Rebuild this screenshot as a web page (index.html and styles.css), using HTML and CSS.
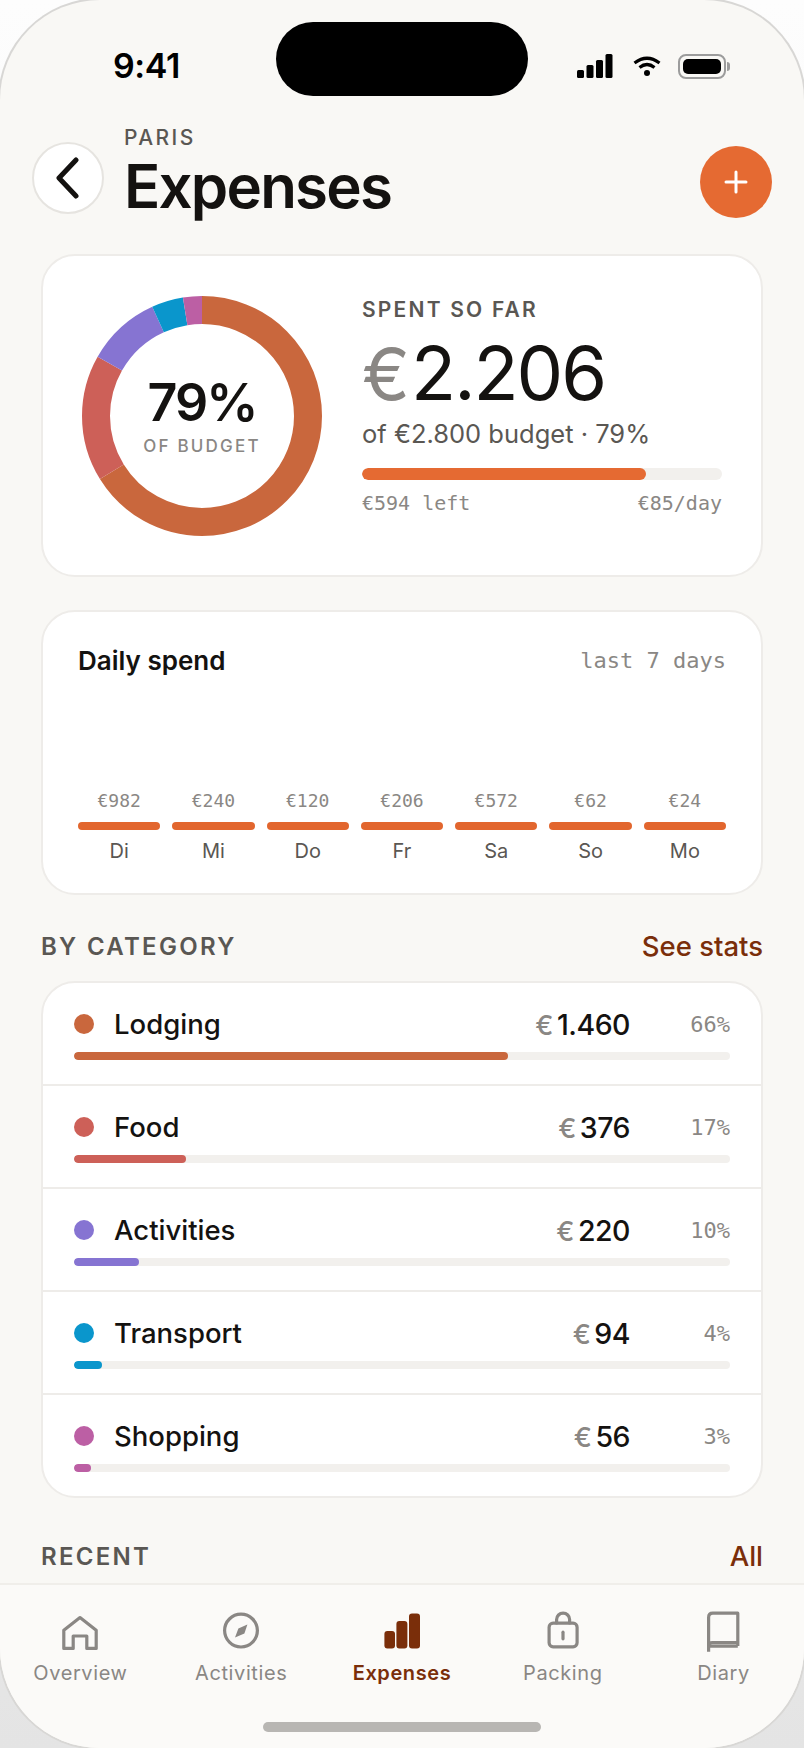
FILE: index.html
```html
<!DOCTYPE html>
<html lang="en">
<head>
    <meta charset="UTF-8">
    <meta name="viewport" content="width=device-width, initial-scale=1.0">
    <title>Expenses</title>
    <link rel="stylesheet" href="styles.css">
</head>
<body>
    <div class="phone">
        <div class="island"></div>

        <div class="status">
            <span class="time">9:41</span>
            <div class="status-icons">
                <svg class="signal" width="36" height="24" viewBox="0 0 36 24">
                    <rect x="0" y="16" width="7" height="8" rx="1.5"/>
                    <rect x="9.5" y="11" width="7" height="13" rx="1.5"/>
                    <rect x="19" y="6" width="7" height="18" rx="1.5"/>
                    <rect x="28.5" y="0" width="7" height="24" rx="1.5"/>
                </svg>
                <svg class="wifi" width="28" height="20" viewBox="0 0 28 20" fill="none" stroke="#000" stroke-width="3.2">
                    <path d="M1.5 7 Q14 -2.5 26.5 7"/>
                    <path d="M6.5 11.5 Q14 5.5 21.5 11.5"/>
                    <circle cx="14" cy="17" r="3" fill="#000" stroke="none"/>
                </svg>
                <div class="battery"><div class="battery-fill"></div></div>
            </div>
        </div>

        <header class="header">
            <button class="back" type="button">
                <svg width="26" height="42" viewBox="0 0 26 42" fill="none" stroke="#141210" stroke-width="5" stroke-linecap="round" stroke-linejoin="round">
                    <path d="M21 3 L4 21 L21 39"/>
                </svg>
            </button>
            <div class="title-block">
                <div class="eyebrow">PARIS</div>
                <h1>Expenses</h1>
            </div>
            <button class="add" type="button">
                <svg width="24" height="24" viewBox="0 0 24 24" stroke="#fff" stroke-width="3" stroke-linecap="round">
                    <path d="M12 2 V22 M2 12 H22"/>
                </svg>
            </button>
        </header>

        <main class="content">
            <section class="card summary">
                <div class="donut">
                    <svg width="240" height="240" viewBox="0 0 240 240" fill="none" stroke-width="28">
                        <g transform="rotate(-90 120 120)">
                            <circle cx="120" cy="120" r="106" pathLength="100" stroke="#c9673d" stroke-dasharray="66.18 100"/>
                            <circle cx="120" cy="120" r="106" pathLength="100" stroke="#cd6058" stroke-dasharray="17.04 100" stroke-dashoffset="-66.18"/>
                            <circle cx="120" cy="120" r="106" pathLength="100" stroke="#8674d2" stroke-dasharray="9.97 100" stroke-dashoffset="-83.22"/>
                            <circle cx="120" cy="120" r="106" pathLength="100" stroke="#0a96cc" stroke-dasharray="4.26 100" stroke-dashoffset="-93.19"/>
                            <circle cx="120" cy="120" r="106" pathLength="100" stroke="#bc5fa4" stroke-dasharray="2.55 100" stroke-dashoffset="-97.45"/>
                        </g>
                    </svg>
                    <div class="donut-label">
                        <div class="donut-pct">79%</div>
                        <div class="donut-sub">OF BUDGET</div>
                    </div>
                </div>
                <div class="summary-text">
                    <div class="spent-label">SPENT SO FAR</div>
                    <div class="spent"><span class="euro">€</span>2.206</div>
                    <div class="budget">of €2.800 budget · 79%</div>
                    <div class="track track-big"><div class="fill fill-orange" style="width: 79%"></div></div>
                    <div class="summary-foot">
                        <span>€594 left</span>
                        <span>€85/day</span>
                    </div>
                </div>
            </section>

            <section class="card daily">
                <div class="daily-head">
                    <span class="daily-title">Daily spend</span>
                    <span class="daily-range">last 7 days</span>
                </div>
                <div class="chart">
                    <div class="day"><span class="day-value">€982</span><div class="day-bar"></div><span class="day-name">Di</span></div>
                    <div class="day"><span class="day-value">€240</span><div class="day-bar"></div><span class="day-name">Mi</span></div>
                    <div class="day"><span class="day-value">€120</span><div class="day-bar"></div><span class="day-name">Do</span></div>
                    <div class="day"><span class="day-value">€206</span><div class="day-bar"></div><span class="day-name">Fr</span></div>
                    <div class="day"><span class="day-value">€572</span><div class="day-bar"></div><span class="day-name">Sa</span></div>
                    <div class="day"><span class="day-value">€62</span><div class="day-bar"></div><span class="day-name">So</span></div>
                    <div class="day"><span class="day-value">€24</span><div class="day-bar"></div><span class="day-name">Mo</span></div>
                </div>
            </section>

            <div class="section-head">
                <span class="section-title">BY CATEGORY</span>
                <span class="section-link">See stats</span>
            </div>

            <section class="card categories">
                <div class="cat">
                    <div class="cat-top">
                        <span class="dot lodging"></span>
                        <span class="cat-name">Lodging</span>
                        <span class="cat-amount"><span class="euro">€</span>1.460</span>
                        <span class="cat-pct">66%</span>
                    </div>
                    <div class="track"><div class="fill lodging" style="width: 66.18%"></div></div>
                </div>
                <div class="cat">
                    <div class="cat-top">
                        <span class="dot food"></span>
                        <span class="cat-name">Food</span>
                        <span class="cat-amount"><span class="euro">€</span>376</span>
                        <span class="cat-pct">17%</span>
                    </div>
                    <div class="track"><div class="fill food" style="width: 17.04%"></div></div>
                </div>
                <div class="cat">
                    <div class="cat-top">
                        <span class="dot activities"></span>
                        <span class="cat-name">Activities</span>
                        <span class="cat-amount"><span class="euro">€</span>220</span>
                        <span class="cat-pct">10%</span>
                    </div>
                    <div class="track"><div class="fill activities" style="width: 9.97%"></div></div>
                </div>
                <div class="cat">
                    <div class="cat-top">
                        <span class="dot transport"></span>
                        <span class="cat-name">Transport</span>
                        <span class="cat-amount"><span class="euro">€</span>94</span>
                        <span class="cat-pct">4%</span>
                    </div>
                    <div class="track"><div class="fill transport" style="width: 4.26%"></div></div>
                </div>
                <div class="cat">
                    <div class="cat-top">
                        <span class="dot shopping"></span>
                        <span class="cat-name">Shopping</span>
                        <span class="cat-amount"><span class="euro">€</span>56</span>
                        <span class="cat-pct">3%</span>
                    </div>
                    <div class="track"><div class="fill shopping" style="width: 2.54%"></div></div>
                </div>
            </section>

            <div class="section-head section-recent">
                <span class="section-title">RECENT</span>
                <span class="section-link">All</span>
            </div>
        </main>

        <nav class="tabbar">
            <div class="tabs">
                <div class="tab">
                    <svg width="44" height="44" viewBox="0 0 22 22" fill="none" stroke="currentColor" stroke-width="1.6" stroke-linejoin="round">
                        <path d="M2.9 19.7 V10.6 L11 4.3 L19.1 10.6 V19.7 H14.4 V13.5 H7.6 V19.7 Z"/>
                    </svg>
                    <span>Overview</span>
                </div>
                <div class="tab">
                    <svg width="44" height="44" viewBox="0 0 22 22" fill="none" stroke="currentColor" stroke-width="1.6">
                        <circle cx="11" cy="10.8" r="8.2"/>
                        <polygon points="14.2,7.7 12.7,12.2 8,14.2 9.7,9.7" fill="currentColor" stroke="none"/>
                    </svg>
                    <span>Activities</span>
                </div>
                <div class="tab tab-active">
                    <svg width="44" height="44" viewBox="0 0 22 22" fill="currentColor">
                        <rect x="2.2" y="11" width="5.3" height="8.7" rx="1.5"/>
                        <rect x="8.2" y="6" width="5.5" height="13.7" rx="1.5"/>
                        <rect x="14.5" y="2.2" width="5.5" height="17.5" rx="1.5"/>
                    </svg>
                    <span>Expenses</span>
                </div>
                <div class="tab">
                    <svg width="44" height="44" viewBox="0 0 22 22" fill="none" stroke="currentColor" stroke-width="1.6" stroke-linecap="round">
                        <rect x="4.05" y="7.1" width="14" height="11.8" rx="2"/>
                        <path d="M7.8 7 V5.3 A3.2 3.2 0 0 1 14.3 5.3 V7"/>
                        <path d="M11 11.6 V14.9"/>
                    </svg>
                    <span>Packing</span>
                </div>
                <div class="tab">
                    <svg width="44" height="44" viewBox="0 0 22 22" fill="none" stroke="currentColor" stroke-width="1.6" stroke-linejoin="round">
                        <path d="M17.9 18.5 V2.1 H5.4 Q3.3 2.1 3.3 4.2 V21.4"/>
                        <path d="M3.3 18.4 Q3.3 16.8 5.2 16.8 H17.9"/>
                        <path d="M4 18.6 H17.9"/>
                    </svg>
                    <span>Diary</span>
                </div>
            </div>
            <div class="home-bar"></div>
        </nav>
    </div>
</body>
</html>
```

FILE: styles.css
```css
* {
    box-sizing: border-box;
}
body {
    margin: 0;
    width: 804px;
    height: 1748px;
    overflow: hidden;
    font-family: Inter, "Noto Sans", sans-serif;
    color: #141210;
    background: linear-gradient(180deg, #fdfdfd 0%, #f4f4f4 50%, #e4e4e4 100%);
}
.phone {
    position: relative;
    display: flex;
    flex-direction: column;
    width: 804px;
    height: 1748px;
    overflow: hidden;
    background-color: #f9f8f5;
    border-radius: 100px;
    box-shadow: 0 0 0 2px #d8d7d5;
}
.island {
    position: absolute;
    top: 22px;
    left: 276px;
    width: 252px;
    height: 74px;
    background-color: #000;
    border-radius: 37px;
}

/* status bar */
.status {
    display: flex;
    justify-content: space-between;
    align-items: center;
    height: 102px;
    padding: 30px 78px 0 113px;
}
.time {
    font-size: 34px;
    line-height: 40px;
    font-weight: 600;
    letter-spacing: -0.4px;
    color: #000;
}
.status-icons {
    display: flex;
    align-items: center;
}
.signal {
    display: block;
    margin-right: 20px;
}
.wifi {
    display: block;
    margin-right: 17px;
}
.battery {
    position: relative;
    width: 48px;
    height: 25px;
    padding: 3px;
    border: 2px solid #9c9c9c;
    border-radius: 8px;
}
.battery::after {
    content: "";
    position: absolute;
    top: 6px;
    right: -6px;
    width: 3px;
    height: 9px;
    background-color: #9c9c9c;
    border-radius: 0 3px 3px 0;
}
.battery-fill {
    height: 100%;
    background-color: #000;
    border-radius: 5px;
}

/* header */
.header {
    display: flex;
    align-items: flex-start;
    height: 152px;
    padding: 24px 32px 0;
}
.back {
    display: flex;
    align-items: center;
    justify-content: center;
    flex: none;
    width: 72px;
    height: 72px;
    margin-top: 16px;
    padding: 0;
    background-color: #fff;
    border: 2px solid #e6e4e0;
    border-radius: 50%;
}
.title-block {
    flex: 1;
    margin-left: 20px;
}
.eyebrow {
    font-size: 21px;
    line-height: 24px;
    font-weight: 500;
    letter-spacing: 2.4px;
    color: #5a5753;
}
h1 {
    margin: 3px 0 0;
    font-size: 60px;
    line-height: 66px;
    font-weight: 600;
    letter-spacing: -1.8px;
}
.add {
    display: flex;
    align-items: center;
    justify-content: center;
    flex: none;
    width: 72px;
    height: 72px;
    margin-top: 20px;
    padding: 0;
    background-color: #e56a32;
    border: none;
    border-radius: 50%;
}

/* main */
.content {
    flex: 1;
    min-height: 0;
    overflow: hidden;
    padding: 0 41px;
}
.card {
    background-color: #fff;
    border: 2px solid #eeece9;
    border-radius: 34px;
}
.euro {
    color: #8a8784;
}

.summary {
    display: flex;
    align-items: center;
    gap: 40px;
    height: 323px;
    padding: 0 39px;
}
.donut {
    position: relative;
    flex: none;
    width: 240px;
    height: 240px;
}
.donut svg {
    display: block;
}
.donut-label {
    position: absolute;
    inset: 0;
    display: flex;
    flex-direction: column;
    align-items: center;
    justify-content: center;
}
.donut-pct {
    font-size: 52px;
    line-height: 58px;
    font-weight: 600;
    letter-spacing: -2px;
}
.donut-sub {
    margin-top: 2px;
    font-size: 17px;
    line-height: 24px;
    font-weight: 500;
    letter-spacing: 2.2px;
    color: #8a8784;
}
.summary-text {
    flex: 1;
    min-width: 0;
    align-self: flex-start;
    padding-top: 42px;
}
.spent-label {
    font-size: 21px;
    line-height: 24px;
    font-weight: 600;
    letter-spacing: 2.2px;
    color: #5a5753;
}
.spent {
    margin-top: 9px;
    font-size: 74px;
    line-height: 84px;
    font-weight: 400;
    letter-spacing: -2px;
}
.spent .euro {
    margin-right: 3px;
    font-size: 72px;
}
.budget {
    margin-top: 2px;
    font-size: 25.5px;
    line-height: 32px;
    color: #5a5753;
}
.track {
    height: 8px;
    background-color: #f2f0ed;
    border-radius: 4px;
    overflow: hidden;
}
.track-big {
    height: 12px;
    margin-top: 18px;
    border-radius: 6px;
}
.fill {
    height: 100%;
    border-radius: 6px;
}
.fill-orange {
    background-color: #e56a32;
}
.summary-foot {
    display: flex;
    justify-content: space-between;
    margin-top: 11px;
    font-family: "DejaVu Sans Mono", monospace;
    font-size: 20px;
    line-height: 24px;
    color: #8a8784;
}

/* daily spend */
.daily {
    height: 285px;
    margin-top: 33px;
    padding: 30px 35px 0 35px;
}
.daily-head {
    display: flex;
    justify-content: space-between;
    align-items: center;
    height: 36px;
}
.daily-title {
    font-size: 26px;
    font-weight: 600;
}
.daily-range {
    font-family: "DejaVu Sans Mono", monospace;
    font-size: 22px;
    color: #8a8784;
}
.chart {
    display: grid;
    grid-template-columns: repeat(7, 1fr);
    gap: 12px;
    margin-top: 112px;
}
.day {
    display: flex;
    flex-direction: column;
    align-items: center;
}
.day-value {
    font-family: "DejaVu Sans Mono", monospace;
    font-size: 18px;
    line-height: 22px;
    color: #8a8784;
}
.day-bar {
    width: 100%;
    height: 8px;
    margin-top: 10px;
    background-color: #e2662e;
    border-radius: 4px;
}
.day-name {
    margin-top: 8px;
    font-size: 20px;
    line-height: 26px;
    color: #5a5753;
}

/* sections */
.section-head {
    display: flex;
    justify-content: space-between;
    align-items: center;
    height: 34px;
    margin-top: 34px;
}
.section-title {
    font-size: 24px;
    font-weight: 600;
    letter-spacing: 2.3px;
    color: #5a5753;
}
.section-link {
    font-size: 27.5px;
    font-weight: 450;
    color: #7a2e0a;
}
.section-recent {
    margin-top: 41px;
}

/* categories */
.categories {
    margin-top: 18px;
}
.cat {
    padding: 24px 31px;
    border-bottom: 2px solid #eeece9;
}
.cat:last-child {
    border-bottom: none;
}
.cat-top {
    display: flex;
    align-items: center;
    height: 34px;
    margin-bottom: 11px;
}
.dot {
    flex: none;
    width: 20px;
    height: 20px;
    margin-right: 20px;
    border-radius: 50%;
}
.cat-name {
    flex: 1;
    font-size: 27.5px;
    font-weight: 450;
}
.cat-amount {
    font-size: 28.5px;
    font-weight: 450;
    letter-spacing: -0.5px;
}
.cat-amount .euro {
    margin-right: 4px;
    font-size: 27px;
}
.cat-pct {
    width: 100px;
    text-align: right;
    font-family: "DejaVu Sans Mono", monospace;
    font-size: 22px;
    color: #8a8784;
}
.lodging { background-color: #c9673d; }
.food { background-color: #cd6058; }
.activities { background-color: #8674d2; }
.transport { background-color: #0a96cc; }
.shopping { background-color: #bc5fa4; }

/* tab bar */
.tabbar {
    flex: none;
    height: 165px;
    background-color: #fbfaf8;
    border-top: 2px solid #f0eeea;
}
.tabs {
    display: flex;
    padding-top: 24px;
}
.tab {
    flex: 1;
    display: flex;
    flex-direction: column;
    align-items: center;
    font-size: 20px;
    line-height: 26px;
    letter-spacing: 0.6px;
    color: #8a8784;
}
.tab svg {
    display: block;
    margin-bottom: 7px;
}
.tab-active {
    font-weight: 600;
    color: #7a2e0a;
}
.home-bar {
    width: 278px;
    height: 10px;
    margin: 36px auto 0;
    background-color: #b8b6b3;
    border-radius: 5px;
}
```
